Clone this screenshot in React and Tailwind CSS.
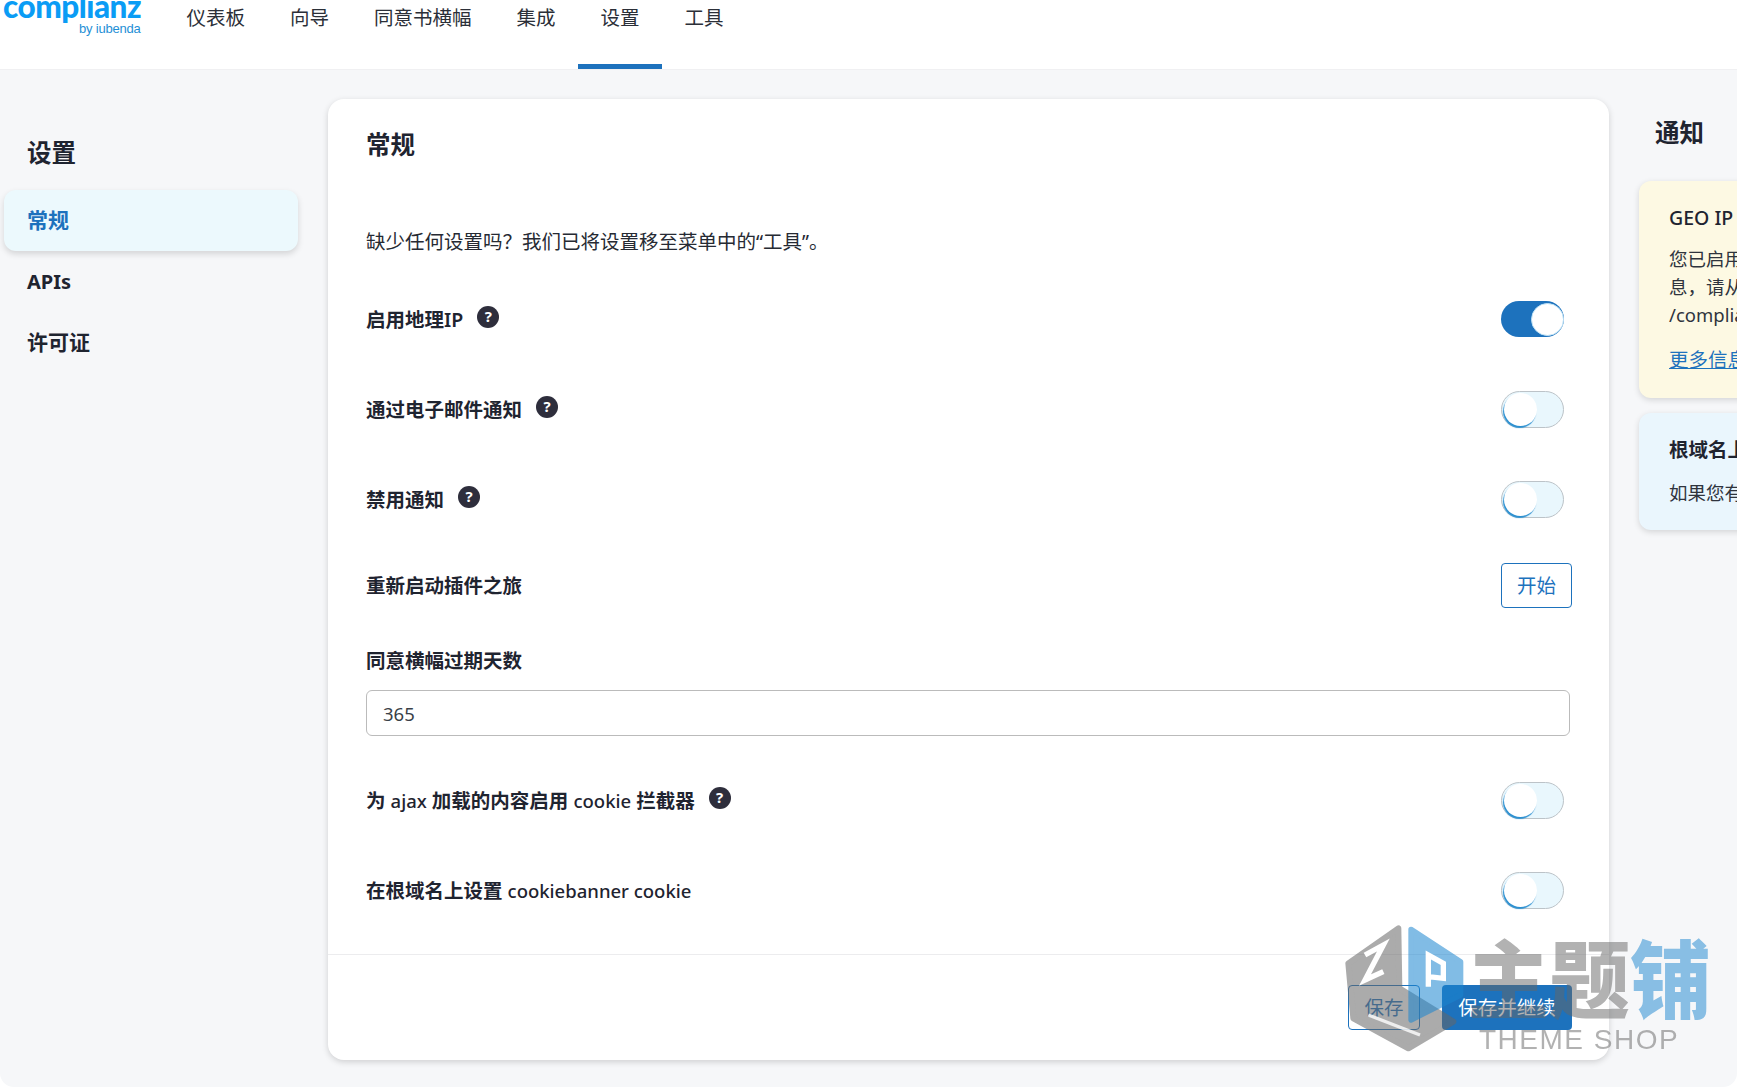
import React from "react";

const fontStack = "font-['Noto_Sans','Noto_Sans_CJK_SC',sans-serif]";

const navItems = ["仪表板", "向导", "同意书横幅", "集成", "设置", "工具"];

const Help = () => (
  <span className="ml-[14px] -mt-[5px] flex h-[22px] w-[22px] items-center justify-center rounded-full bg-[#2e2e3c] text-[15px] leading-none font-bold text-white">
    ?
  </span>
);

const Latin = ({ children }) => <span className="text-[18.5px] font-medium">{children}</span>;

const Toggle = ({ on }) =>
  on ? (
    <div className="mr-[8px] flex h-[36px] w-[63px] items-center justify-end rounded-full bg-[#1d72bd]">
      <div className="h-[33px] w-[33px] rounded-full border border-[#bfe3f7] bg-white" />
    </div>
  ) : (
    <div className="mr-[8px] flex h-[37px] w-[63px] items-center rounded-full border border-[#bcc3c8] bg-[#e9f7fd] pl-[2px]">
      <div className="h-[33px] w-[33px] rounded-full bg-white shadow-[-1px_2px_1px_#2b8fd0]" />
    </div>
  );

const Row = ({ label, help, on }) => (
  <div className="flex h-[90px] items-center justify-between">
    <div className="flex items-center text-[19.5px] font-semibold text-[#1f2430]">
      <span className="pt-[2px]">{label}</span>
      {help && <Help />}
    </div>
    <Toggle on={on} />
  </div>
);

const Watermark = () => (
  <div className="pointer-events-none absolute top-[880px] left-[1300px] h-[207px] w-[437px]">
    <svg className="absolute inset-0 h-full w-full blur-[0.5px]" viewBox="0 0 1311 621">
      <path
        d="M145 250 L295 145 L298 325 L460 425 L325 505 L160 415 Z"
        fill="#666666"
        stroke="#666666"
        strokeWidth="18"
        strokeLinejoin="round"
        opacity="0.55"
      />
      <path
        d="M333 148 L482 245 L482 345 L333 420 Z"
        fill="#1a85cf"
        stroke="#1a85cf"
        strokeWidth="16"
        strokeLinejoin="round"
        opacity="0.55"
      />
      <path d="M195 225 L250 195 L195 300 L250 275" fill="none" stroke="#ffffff" strokeWidth="16" />
      <path d="M385 320 L385 225 L430 250 L430 295 L385 290" fill="none" stroke="#ffffff" strokeWidth="16" />
      <path d="M205 405 L360 465" fill="none" stroke="#ffffff" strokeWidth="10" opacity="0.8" />
    </svg>
    <div className="absolute top-[54px] left-[168px] flex scale-y-105 text-[81px] leading-[90px] font-black blur-[0.5px]">
      <span className="text-[#666666] opacity-50">主题</span>
      <span className="text-[#1a85cf] opacity-50">铺</span>
    </div>
    <div className="absolute top-[143px] left-[179px] font-['Liberation_Sans',sans-serif] text-[28px] leading-[34px] tracking-[1.5px] text-[#666666] opacity-50 blur-[0.5px]">
      THEME SHOP
    </div>
  </div>
);

const App = () => {
  return (
    <div className={`relative h-[1087px] overflow-hidden bg-white ${fontStack}`}>
      {/* Top bar */}
      <header className="flex h-[69px] bg-white">
        <div className="relative ml-[3px] h-[69px] w-[161px] shrink-0 overflow-hidden">
          <div className="absolute -top-[16px] left-0 font-['Lato',sans-serif] text-[31.5px] leading-[44px] font-black tracking-[-0.5px] text-[#0a9cf5]">
            complianz
          </div>
          <div className="absolute top-[20px] left-[76px] font-['Liberation_Sans',sans-serif] text-[13px] leading-[18px] tracking-[-0.2px] text-[#1f8fd6]">
            by iubenda
          </div>
        </div>
        <nav className="flex">
          {navItems.map((item) => (
            <div
              key={item}
              className={`h-[69px] border-b-[5px] px-[22.5px] pt-[4px] text-[19.5px] leading-[28px] text-[#2b2f38] ${
                item === "设置" ? "border-[#1d72bd]" : "border-transparent"
              }`}
            >
              {item}
            </div>
          ))}
        </nav>
      </header>

      <div className="flex h-[1018px] rounded-b-[14px] border-t border-[#f0f0f2] bg-[#f6f7f9]">
        {/* Sidebar */}
        <aside className="w-[328px] shrink-0 pt-[63px] pr-[30px] pl-[4px]">
          <h2 className="mb-[17px] pl-[23px] text-[24.5px] leading-[40px] font-bold text-[#1f2430]">设置</h2>
          <div className="flex h-[61px] items-center rounded-xl bg-[#ecf9fd] pl-[23px] text-[21px] font-bold text-[#1d72bd] shadow-[0_3px_6px_rgba(0,0,0,0.14)]">
            常规
          </div>
          <div className="flex h-[61px] items-center pl-[23px] text-[20px] font-bold text-[#1f2430]">APIs</div>
          <div className="flex h-[61px] items-center pl-[23px] text-[21px] font-bold text-[#1f2430]">许可证</div>
        </aside>

        {/* Main card */}
        <main className="mt-[29px] flex h-[961px] w-[1281px] shrink-0 flex-col rounded-2xl bg-white shadow-[0_2px_6px_rgba(0,0,0,0.16)]">
          <div className="flex-1 pr-[37px] pl-[38px]">
            <h1 className="pt-[26px] text-[24.5px] leading-[40px] font-bold text-[#1f2430]">常规</h1>
            <p className="pt-[63px] text-[19.5px] leading-[28px] text-[#262a33]">
              缺少任何设置吗？我们已将设置移至菜单中的“工具”。
            </p>
            <div className="mt-[18px]">
              <Row label="启用地理IP" help on />
              <Row label="通过电子邮件通知" help />
              <Row label="禁用通知" help />
            </div>
            <div className="flex h-[82px] items-center justify-between">
              <span className="pt-[2px] text-[19.5px] font-semibold text-[#1f2430]">重新启动插件之旅</span>
              <button className="h-[45px] w-[71px] rounded border border-[#1d72bd] pt-[2px] text-[19.5px] text-[#1d72bd]">
                开始
              </button>
            </div>
            <label className="block pt-[21px] text-[19.5px] leading-[28px] font-semibold text-[#1f2430]">
              同意横幅过期天数
            </label>
            <input
              readOnly
              value="365"
              className="mt-[15px] h-[46px] w-[1204px] rounded-md border border-[#bbbbbb] pl-[16px] text-[18.5px] text-[#3a3f48]"
            />
            <div className="mt-[19px]">
              <Row
                label={
                  <>
                    为 <Latin>ajax</Latin> 加载的内容启用 <Latin>cookie</Latin> 拦截器
                  </>
                }
                help
              />
              <Row
                label={
                  <>
                    在根域名上设置 <Latin>cookiebanner cookie</Latin>
                  </>
                }
              />
            </div>
          </div>
          <div className="flex h-[106px] justify-end gap-[22px] border-t border-[#ececee] pt-[30px] pr-[37px]">
            <button className="h-[45px] w-[72px] rounded border border-[#1d72bd] text-[19.5px] text-[#1d72bd]">
              保存
            </button>
            <button className="h-[45px] w-[130px] rounded bg-[#1d72bd] text-[19.5px] text-white">保存并继续</button>
          </div>
        </main>

        {/* Notices */}
        <aside className="min-w-0 flex-1 pl-[30px]">
          <h2 className="pt-[43px] pl-[16px] text-[24.5px] leading-[40px] font-bold text-[#1f2430]">通知</h2>
          <div className="mt-[28px] h-[217px] w-[340px] rounded-xl bg-[#fdf9e3] pt-[24px] pl-[30px] shadow-[0_2px_6px_rgba(0,0,0,0.14)]">
            <div className="text-[19.5px] leading-[26px] font-medium whitespace-nowrap text-[#1f2430]">GEO IP 许可证</div>
            <div className="mt-[14px] text-[18.5px] leading-[28px] whitespace-nowrap text-[#2f343d]">
              <div>您已启用地理IP功能</div>
              <div>息，请从</div>
              <div>/complianz</div>
            </div>
            <div className="mt-[17px] text-[19.5px] leading-[28px] whitespace-nowrap text-[#1d72bd] underline">更多信息</div>
          </div>
          <div className="mt-[15px] h-[117px] w-[340px] rounded-xl bg-[#eaf6fd] pt-[24px] pl-[30px] shadow-[0_2px_6px_rgba(0,0,0,0.14)]">
            <div className="text-[19.5px] leading-[26px] font-bold whitespace-nowrap text-[#1f2430]">根域名上</div>
            <div className="mt-[16px] text-[18.5px] leading-[28px] whitespace-nowrap text-[#2f343d]">如果您有</div>
          </div>
        </aside>
      </div>

      <Watermark />
    </div>
  );
};

export default App;
